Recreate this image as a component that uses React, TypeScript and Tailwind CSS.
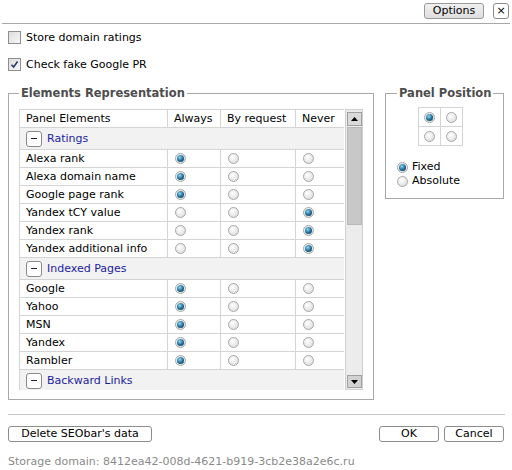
import React from 'react';

function Radio({ on }: { on?: boolean }) {
    return (
        <span className="inline-flex items-center justify-center w-[11px] h-[11px] rounded-full border border-[#a8a8a8] bg-[radial-gradient(circle_at_40%_35%,#ffffff,#d6d6d6)] align-middle shrink-0">
            {on && (
                <span className="w-[7px] h-[7px] rounded-full bg-[radial-gradient(circle_at_40%_35%,#8fd8f2,#1a6890_55%,#0a3a55)]" />
            )}
        </span>
    );
}

function Checkbox({ checked }: { checked?: boolean }) {
    return (
        <span className="inline-flex items-center justify-center w-[13px] h-[13px] border border-[#8e8e8e] bg-[linear-gradient(135deg,#dcdcdc,#f8f8f8)] shrink-0">
            {checked && (
                <svg width="9" height="9" viewBox="0 0 9 9" aria-hidden="true">
                    <path d="M1.5 4.8 L3.6 7 L7.6 1.6" fill="none" stroke="#2b3c6b" strokeWidth={1.6} />
                </svg>
            )}
        </span>
    );
}

function Button({ children, className = '' }: { children: React.ReactNode; className?: string }) {
    return (
        <button className={`h-[16px] border border-[#8c8c8c] rounded-[3px] bg-white text-[11px] leading-[14px] text-black flex items-center justify-center ${className}`}>
            {children}
        </button>
    );
}

type Row = { name: string; pick: 0 | 1 | 2 };
type Group = { title: string; rows: Row[] };

// only what fits in the visible part of the list
const groups: Group[] = [
    {
        title: 'Ratings',
        rows: [
            { name: 'Alexa rank', pick: 0 },
            { name: 'Alexa domain name', pick: 0 },
            { name: 'Google page rank', pick: 0 },
            { name: 'Yandex tCY value', pick: 2 },
            { name: 'Yandex rank', pick: 2 },
            { name: 'Yandex additional info', pick: 2 },
        ],
    },
    {
        title: 'Indexed Pages',
        rows: [
            { name: 'Google', pick: 0 },
            { name: 'Yahoo', pick: 0 },
            { name: 'MSN', pick: 0 },
            { name: 'Yandex', pick: 0 },
            { name: 'Rambler', pick: 0 },
        ],
    },
    { title: 'Backward Links', rows: [] },
];

const cell = 'border border-[#d4d4d4] h-[18px] p-0 pl-[6px] align-middle';
const legend = 'px-[2px] font-bold text-[11.5px] leading-[14px] text-[#4d4d4d]';

export default function App() {
    return (
        <div className="w-[512px] h-[470px] bg-white text-black text-[11px] leading-[14px] font-['DejaVu_Sans',Verdana,sans-serif] overflow-hidden">
            {/* Top bar */}
            <div className="mx-[2px] h-[24px] border-b border-[#a8a8a8] flex justify-end items-start pt-[3px] pr-[1px] gap-[9px]">
                <Button className="w-[60px] bg-[linear-gradient(#f0f0f0,#dedede)] border-[#9a9a9a]">Options</Button>
                <Button className="w-[16px] text-[10px]">×</Button>
            </div>

            {/* Checkboxes */}
            <div className="pl-[8px]">
                <div className="mt-[7px] flex items-center gap-[5px] h-[13px]">
                    <Checkbox />
                    <span>Store domain ratings</span>
                </div>
                <div className="mt-[14px] flex items-center gap-[5px] h-[13px]">
                    <Checkbox checked />
                    <span>Check fake Google PR</span>
                </div>
            </div>

            {/* Fieldsets */}
            <div className="mt-[15px] pl-[8px] flex items-start gap-[11px]">
                <fieldset className="w-[366px] border border-[#a8a8a8] pl-[10px] pr-[9px] pt-[9px] pb-[9px]">
                    <legend className={legend}>Elements Representation</legend>
                    <div className="flex h-[281px]">
                        <div className="w-[325px] h-[281px] overflow-hidden">
                            <table className="w-[325px] table-fixed border-collapse">
                                <colgroup>
                                    <col className="w-[148px]" />
                                    <col className="w-[53px]" />
                                    <col className="w-[75px]" />
                                    <col className="w-[49px]" />
                                </colgroup>
                                <thead>
                                    <tr>
                                        <td className={cell}>Panel Elements</td>
                                        <td className={cell}>Always</td>
                                        <td className={cell}>By request</td>
                                        <td className={cell}>Never</td>
                                    </tr>
                                </thead>
                                <tbody>
                                    {groups.map((g) => (
                                        <React.Fragment key={g.title}>
                                            <tr>
                                                <td colSpan={4} className="border border-[#d4d4d4] h-[22px] p-0 pl-[6px] bg-[#f2f2f2] align-middle">
                                                    <div className="flex items-center gap-[5px]">
                                                        <span className="w-[16px] h-[16px] border border-[#8a8a8a] rounded-[3px] bg-white flex items-center justify-center">
                                                            <span className="w-[6px] h-px bg-[#222]" />
                                                        </span>
                                                        <span className="text-[#1c1ca0]">{g.title}</span>
                                                    </div>
                                                </td>
                                            </tr>
                                            {g.rows.map((r) => (
                                                <tr key={g.title + r.name}>
                                                    <td className={cell}>{r.name}</td>
                                                    <td className={cell + ' pl-[7px]'}><Radio on={r.pick === 0} /></td>
                                                    <td className={cell + ' pl-[7px]'}><Radio on={r.pick === 1} /></td>
                                                    <td className={cell + ' pl-[7px]'}><Radio on={r.pick === 2} /></td>
                                                </tr>
                                            ))}
                                        </React.Fragment>
                                    ))}
                                </tbody>
                            </table>
                        </div>

                        {/* Scrollbar */}
                        <div className="ml-[1px] w-[18px] h-[281px] border border-[#d0d0d0] bg-[#ececec] flex flex-col items-center pt-[2px] pb-[1px]">
                            <div className="w-[15px] h-[14px] border border-[#a0a0a0] bg-[#dadada] flex items-center justify-center">
                                <svg width="7" height="4" viewBox="0 0 7 4" aria-hidden="true"><path d="M0 4 L3.5 0 L7 4 Z" fill="#000" /></svg>
                            </div>
                            <div className="mt-px w-[15px] h-[98px] border border-[#b8b8b8] bg-[#c8c8c8]" />
                            <div className="flex-1" />
                            <div className="w-[15px] h-[13px] border border-[#a0a0a0] bg-[#d2d2d2] flex items-center justify-center">
                                <svg width="7" height="4" viewBox="0 0 7 4" aria-hidden="true"><path d="M0 0 L3.5 4 L7 0 Z" fill="#000" /></svg>
                            </div>
                        </div>
                    </div>
                </fieldset>

                <fieldset className="w-[119px] border border-[#a8a8a8] pl-[11px] pt-[7px] pb-[10px]">
                    <legend className={legend}>Panel Position</legend>
                    <div className="ml-[21px] w-[45px] grid grid-cols-2 border-t border-l border-[#d4d4d4]">
                        {[true, false, false, false].map((on, i) => (
                            <div key={i} className="h-[19px] border-r border-b border-[#d4d4d4] flex items-center justify-center">
                                <Radio on={on} />
                            </div>
                        ))}
                    </div>
                    <div className="mt-[14px] flex items-center gap-[4px] h-[14px]">
                        <Radio on />
                        <span>Fixed</span>
                    </div>
                    <div className="flex items-center gap-[4px] h-[14px]">
                        <Radio />
                        <span>Absolute</span>
                    </div>
                </fieldset>
            </div>

            {/* Footer */}
            <div className="ml-[8px] w-[497px] mt-[14px] border-t border-[#c8c8c8]" />
            <div className="mt-[11px] px-[8px] flex items-center">
                <Button className="w-[144px]">Delete SEObar's data</Button>
                <div className="flex-1" />
                <Button className="w-[60px]">OK</Button>
                <Button className="w-[60px] ml-[5px]">Cancel</Button>
            </div>
            <div className="mt-[13px] pl-[8px] text-[#8a8a8a]">Storage domain: 8412ea42-008d-4621-b919-3cb2e38a2e6c.ru</div>
        </div>
    );
}
